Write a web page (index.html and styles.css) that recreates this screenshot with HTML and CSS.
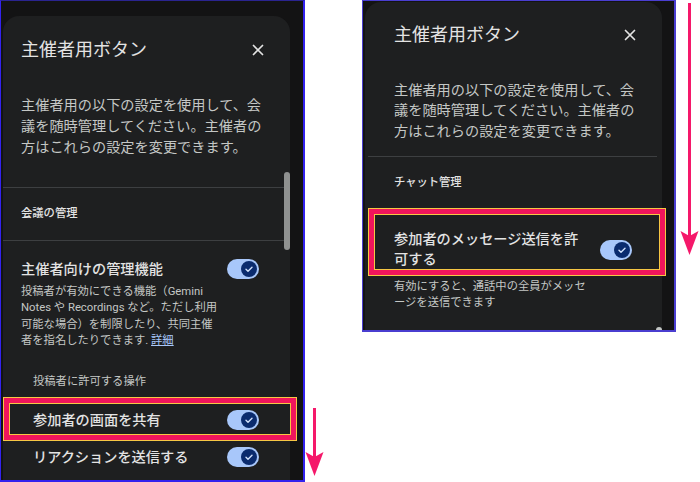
FILE: index.html
```html
<!DOCTYPE html>
<html lang="ja">
<head>
<meta charset="utf-8">
<title>主催者用ボタン</title>
<link rel="stylesheet" href="styles.css">
</head>
<body>
<div class="page">
  <section class="shot shot-left">
    <div class="card card-left">
      <div class="scroll-thumb"></div>
      <header class="head">
        <h1 class="title">主催者用ボタン</h1>
        <svg class="close" viewBox="0 0 12 12"><path d="M1.5 1.5l9 9M10.5 1.5l-9 9" stroke="#e3e3e3" stroke-width="1.7" stroke-linecap="round"/></svg>
      </header>
      <p class="intro">主催者用の以下の設定を使用して、会<br>議を随時管理してください。主催者の<br>方はこれらの設定を変更できます。</p>
      <div class="section-label">会議の管理</div>
      <div class="setting main">
        <div class="setting-title">主催者向けの管理機能</div>
        <svg class="toggle" viewBox="0 0 32 20"><rect width="32" height="20" rx="10" fill="#a8c7fa"/><circle cx="22" cy="10" r="8" fill="#0a2b6e"/><path d="M19 10.3l2 2 4-4" fill="none" stroke="#d3e3fd" stroke-width="1.4" stroke-linecap="round" stroke-linejoin="round"/></svg>
      </div>
      <p class="desc">投稿者が有効にできる機能（Gemini<br>Notes や Recordings など。ただし利用<br>可能な場合）を制限したり、共同主催<br>者を指名したりできます. <a class="link" href="#">詳細</a></p>
      <div class="sub-label">投稿者に許可する操作</div>
      <div class="setting sub hl">
        <div class="setting-title">参加者の画面を共有</div>
        <svg class="toggle" viewBox="0 0 32 20"><rect width="32" height="20" rx="10" fill="#a8c7fa"/><circle cx="22" cy="10" r="8" fill="#0a2b6e"/><path d="M19 10.3l2 2 4-4" fill="none" stroke="#d3e3fd" stroke-width="1.4" stroke-linecap="round" stroke-linejoin="round"/></svg>
      </div>
      <div class="setting sub">
        <div class="setting-title">リアクションを送信する</div>
        <svg class="toggle" viewBox="0 0 32 20"><rect width="32" height="20" rx="10" fill="#a8c7fa"/><circle cx="22" cy="10" r="8" fill="#0a2b6e"/><path d="M19 10.3l2 2 4-4" fill="none" stroke="#d3e3fd" stroke-width="1.4" stroke-linecap="round" stroke-linejoin="round"/></svg>
      </div>
    </div>
  </section>

  <svg class="arrow arrow-left" viewBox="0 0 20 68"><path d="M9.5 0V52" stroke="#f5186a" stroke-width="3"/><path d="M0.5 44L9.5 49L18.5 44L9.5 68Z" fill="#f5186a"/></svg>

  <section class="shot shot-right">
    <div class="card card-right">
      <div class="scroll-thumb"></div>
      <header class="head">
        <h1 class="title">主催者用ボタン</h1>
        <svg class="close" viewBox="0 0 12 12"><path d="M1.5 1.5l9 9M10.5 1.5l-9 9" stroke="#e3e3e3" stroke-width="1.7" stroke-linecap="round"/></svg>
      </header>
      <p class="intro">主催者用の以下の設定を使用して、会<br>議を随時管理してください。主催者の<br>方はこれらの設定を変更できます。</p>
      <div class="divider"></div>
      <div class="chat-label">チャット管理</div>
      <div class="setting hl">
        <div class="setting-title">参加者のメッセージ送信を許<br>可する</div>
        <svg class="toggle" viewBox="0 0 32 20"><rect width="32" height="20" rx="10" fill="#a8c7fa"/><circle cx="22" cy="10" r="8" fill="#0a2b6e"/><path d="M19 10.3l2 2 4-4" fill="none" stroke="#d3e3fd" stroke-width="1.4" stroke-linecap="round" stroke-linejoin="round"/></svg>
      </div>
      <p class="desc">有効にすると、通話中の全員がメッセ<br>ージを送信できます</p>
    </div>
  </section>

  <svg class="arrow arrow-right" viewBox="0 0 20 256"><path d="M9.5 3V240" stroke="#f5186a" stroke-width="3"/><path d="M0.5 231L9.5 236L18.5 231L9.5 255Z" fill="#f5186a"/></svg>
</div>
</body>
</html>
```
FILE: styles.css
```css
* { box-sizing: border-box; }

body {
  margin: 0;
  background: #ffffff;
  font-family: Roboto, "Noto Sans CJK JP", sans-serif;
}

.page {
  display: flex;
  align-items: flex-start;
  width: 700px;
  height: 482px;
}

.shot {
  display: flex;
  flex: none;
  background: #131314;
  overflow: hidden;
}

.shot-left {
  width: 305px;
  height: 482px;
  border: 1px solid #3322ee;
  border-top-color: #2a2490;
  border-right-width: 2px;
  border-bottom-width: 2px;
  padding: 15px 0 0 2px;
}

.shot-right {
  width: 314px;
  height: 332px;
  margin-left: 37px;
  border: 1px solid #4a3ed0;
  border-right-width: 2px;
  border-bottom-width: 2px;
  padding: 1px 0 0 2px;
}

.card {
  position: relative;
  flex: none;
  background: #1e1f20;
  border-radius: 16px 16px 0 0;
  color: #e3e3e3;
}

.card-left { width: 287px; }
.card-right { width: 297px; }

.scroll-thumb {
  position: absolute;
  right: 0;
  width: 6px;
  border-radius: 3px;
  background: #8f9190;
}

.card-left .scroll-thumb { top: 156px; height: 78px; }
.card-right .scroll-thumb { bottom: 0; height: 3px; border-radius: 3px 3px 0 0; background: #c4c7c5; }

.head {
  display: flex;
  justify-content: space-between;
  align-items: center;
}

.card-left .head { padding: 22px 26px 0 18px; }
.card-right .head { padding: 21px 26px 0 29px; }

.title {
  margin: 0;
  font-size: 18px;
  font-weight: 400;
  line-height: 24px;
  color: #e3e3e3;
}

.close { width: 12px; height: 12px; flex: none; }

.intro {
  margin: 0;
  font-size: 14.2px;
  color: #c4c7c5;
  white-space: nowrap;
}

.card-left .intro { padding: 0 18px; margin: 32.5px 0 29.5px; line-height: 21px; }
.card-right .intro { padding: 0 20px 0 29px; margin-top: 32.75px; line-height: 20.5px; }

.section-label {
  height: 54px;
  padding-left: 18px;
  border-top: 1px solid #3d3f41;
  border-bottom: 1px solid #3d3f41;
  font-size: 11.3px;
  font-weight: 500;
  line-height: 52px;
}

.divider {
  height: 1px;
  margin: 14.75px 5px 0 3px;
  background: #3d3f41;
}

.chat-label {
  margin-top: 18px;
  padding-left: 29px;
  font-size: 11.3px;
  font-weight: 500;
  line-height: 16px;
}

.setting {
  display: flex;
  justify-content: space-between;
  align-items: center;
}

.setting-title {
  font-size: 14.2px;
  font-weight: 500;
  line-height: 22px;
  color: #e3e3e3;
  white-space: nowrap;
}

.toggle { width: 32px; height: 20px; flex: none; }

.card-left .main { padding: 17px 31px 0 18px; }

.setting.sub {
  height: 37px;
  padding: 0 31px 0 30px;
}

.card-left .hl { margin-top: 11px; }

.card-right .hl {
  margin-top: 21px;
  padding: 18px 30px 2.5px 29px;
}

.card-right .hl .setting-title { line-height: 19.5px; }

.hl { position: relative; }

.hl::after {
  content: "";
  position: absolute;
  border: 1px solid #f6c744;
  box-shadow: inset 0 0 0 5px #f0155c, inset 0 0 0 6px #f6c744;
  pointer-events: none;
}

.card-left .hl::after { top: -4px; left: 0; right: -7px; bottom: -3px; }
.card-right .hl::after { top: -4px; left: 3px; right: -4px; bottom: -4px; }

.desc {
  margin: 0;
  font-size: 11.3px;
  color: #c4c7c5;
  white-space: nowrap;
}

.card-left .desc { padding: 0 18px; margin-top: 3.75px; line-height: 16.5px; }
.card-right .desc { padding: 0 29px; margin-top: 7px; line-height: 16px; }

.link {
  color: #a8c7fa;
  text-decoration: underline;
}

.sub-label {
  margin-top: 24.25px;
  padding-left: 30px;
  font-size: 11.3px;
  line-height: 16px;
  color: #c4c7c5;
}

.arrow { flex: none; width: 20px; }
.arrow-left { margin-top: 408px; height: 68px; }
.arrow-right { margin-left: 4px; height: 256px; }
```
